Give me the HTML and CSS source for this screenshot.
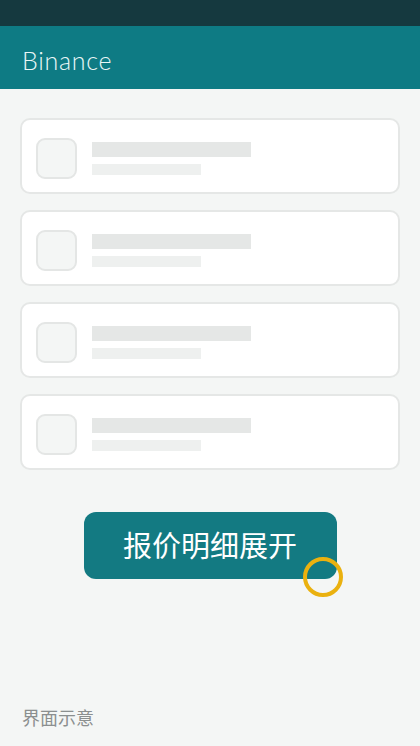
FILE: index.html
```html
<!DOCTYPE html>
<html lang="zh-CN">
<head>
    <meta charset="UTF-8">
    <meta name="viewport" content="width=device-width, initial-scale=1.0">
    <title>Binance</title>
    <link rel="stylesheet" href="styles.css">
</head>
<body>
    <div class="status-bar"></div>
    <header class="app-bar">Binance</header>

    <main class="content">
        <div class="card">
            <div class="thumb"></div>
            <div class="lines">
                <div class="line long"></div>
                <div class="line short"></div>
            </div>
        </div>
        <div class="card">
            <div class="thumb"></div>
            <div class="lines">
                <div class="line long"></div>
                <div class="line short"></div>
            </div>
        </div>
        <div class="card">
            <div class="thumb"></div>
            <div class="lines">
                <div class="line long"></div>
                <div class="line short"></div>
            </div>
        </div>
        <div class="card">
            <div class="thumb"></div>
            <div class="lines">
                <div class="line long"></div>
                <div class="line short"></div>
            </div>
        </div>

        <div class="action">
            <button class="expand-btn">报价明细展开</button>
            <span class="touch-ring"></span>
        </div>
    </main>

    <footer class="caption">界面示意</footer>
</body>
</html>
```

FILE: styles.css
```css
/* === BASE === */
body {
    margin: 0;
    width: 420px;
    height: 746px;
    overflow: hidden;
    background: #f4f6f5;
    font-family: "Noto Sans CJK SC", "Noto Sans", sans-serif;
    display: flex;
    flex-direction: column;
}

/* === BARS === */
.status-bar {
    height: 26px;
    background: #15393f;
}

.app-bar {
    height: 63px;
    box-sizing: border-box;
    padding: 19px 0 0 22px;
    background: #0e7b84;
    color: #eaf7f7;
    font-family: "Lato", "Noto Sans", sans-serif;
    font-weight: 300;
    font-size: 25px;
    line-height: 30px;
    letter-spacing: 0.7px;
}

/* === CARDS === */
.content {
    flex: 1;
    padding: 29px 20px 0;
    display: flex;
    flex-direction: column;
    gap: 16px;
}

.card {
    height: 76px;
    box-sizing: border-box;
    border: 2px solid #e5e7e6;
    border-radius: 10px;
    background: #fff;
    display: flex;
    align-items: center;
    padding: 5px 0 0 14px;
    gap: 15px;
}

.thumb {
    width: 41px;
    height: 41px;
    box-sizing: border-box;
    border: 2px solid #e4e6e5;
    border-radius: 9px;
    background: #f4f6f5;
}

.lines {
    display: flex;
    flex-direction: column;
    gap: 7px;
    margin-top: 0;
}

.line.long {
    width: 159px;
    height: 15px;
    background: #e5e7e6;
}

.line.short {
    width: 109px;
    height: 11px;
    background: #eef0ef;
}

/* === BUTTON === */
.action {
    position: relative;
    align-self: center;
    margin: 26px 0 0;
}

.expand-btn {
    display: block;
    width: 253px;
    height: 67px;
    border: 0;
    border-radius: 12px;
    background: #137a82;
    color: #fff;
    font-family: "Noto Sans CJK SC", sans-serif;
    font-weight: 400;
    font-size: 29px;
    padding: 0 0 4px;
}

.touch-ring {
    position: absolute;
    left: 219px;
    top: 45px;
    width: 32px;
    height: 32px;
    border: 4px solid #eab10f;
    border-radius: 50%;
}

/* === FOOTER === */
.caption {
    padding: 0 0 16px 22px;
    color: #8b8f8f;
    font-size: 18px;
    line-height: 26px;
}
```
